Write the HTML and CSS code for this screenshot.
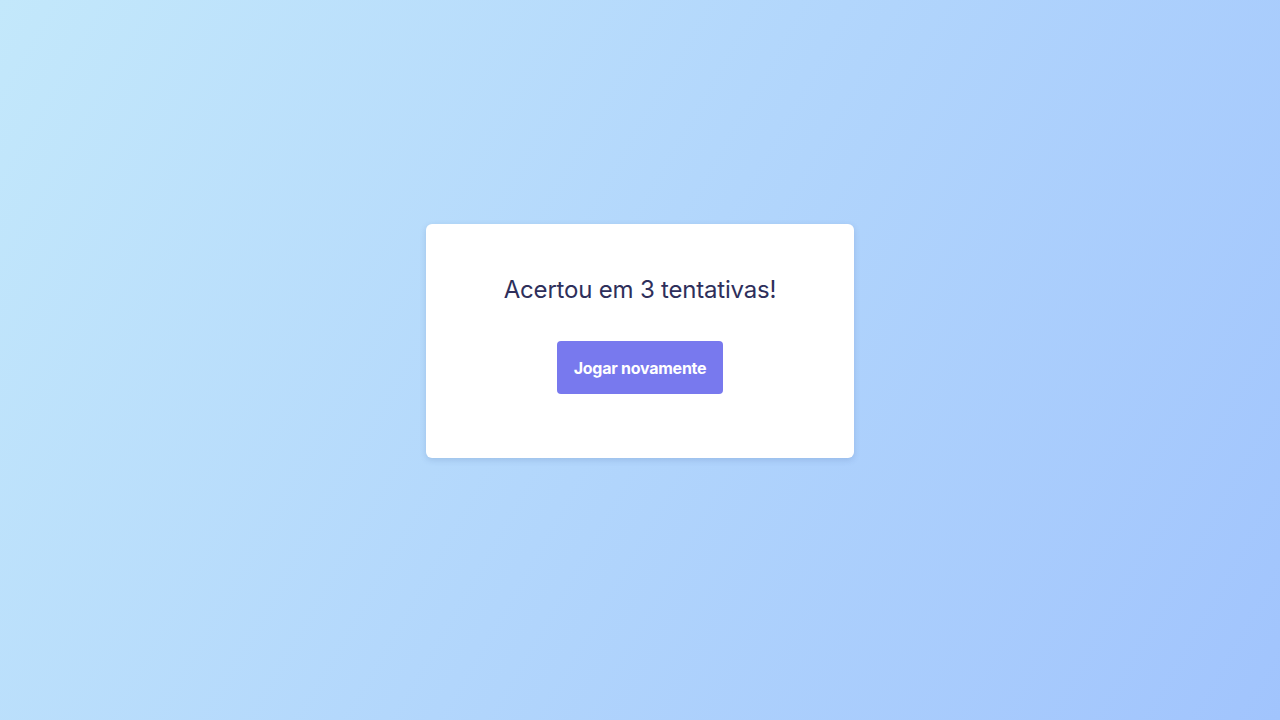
FILE: index.html
```html
<!DOCTYPE html>
<html lang="pt-BR">
<head>
<meta charset="utf-8">
<title>Jogo</title>
<link rel="stylesheet" href="styles.css">
</head>
<body>
<main class="page">
  <section class="card">
    <h1 class="result">Acertou em 3 tentativas!</h1>
    <button class="btn" type="button">Jogar novamente</button>
  </section>
</main>
</body>
</html>
```
FILE: styles.css
```css
* { box-sizing: border-box; }
html, body { margin: 0; height: 100%; }
body {
  font-family: "Inter", "Noto Sans", sans-serif;
  background: linear-gradient(120deg, #c3e8fb 0%, #a1c4fd 100%);
}
.page {
  min-height: 100vh;
  display: flex;
  align-items: center;
  justify-content: center;
  padding-bottom: 38px;
}
.card {
  width: 428px;
  height: 234px;
  background: #fff;
  border-radius: 6px;
  box-shadow: 0 2px 6px rgba(60, 90, 150, 0.2);
  padding: 48px 24px 0;
  display: flex;
  flex-direction: column;
  align-items: center;
}
.result {
  margin: 0;
  font-size: 24px;
  line-height: 36px;
  font-weight: 400;
  color: #2e2f5b;
  letter-spacing: -0.2px;
}
.btn {
  margin-top: 33px;
  height: 53px;
  padding: 0 17px;
  border: 0;
  border-radius: 4px;
  background: #7879ee;
  color: #fff;
  font-family: inherit;
  font-size: 16px;
  font-weight: 700;
  letter-spacing: -0.25px;
}
```
